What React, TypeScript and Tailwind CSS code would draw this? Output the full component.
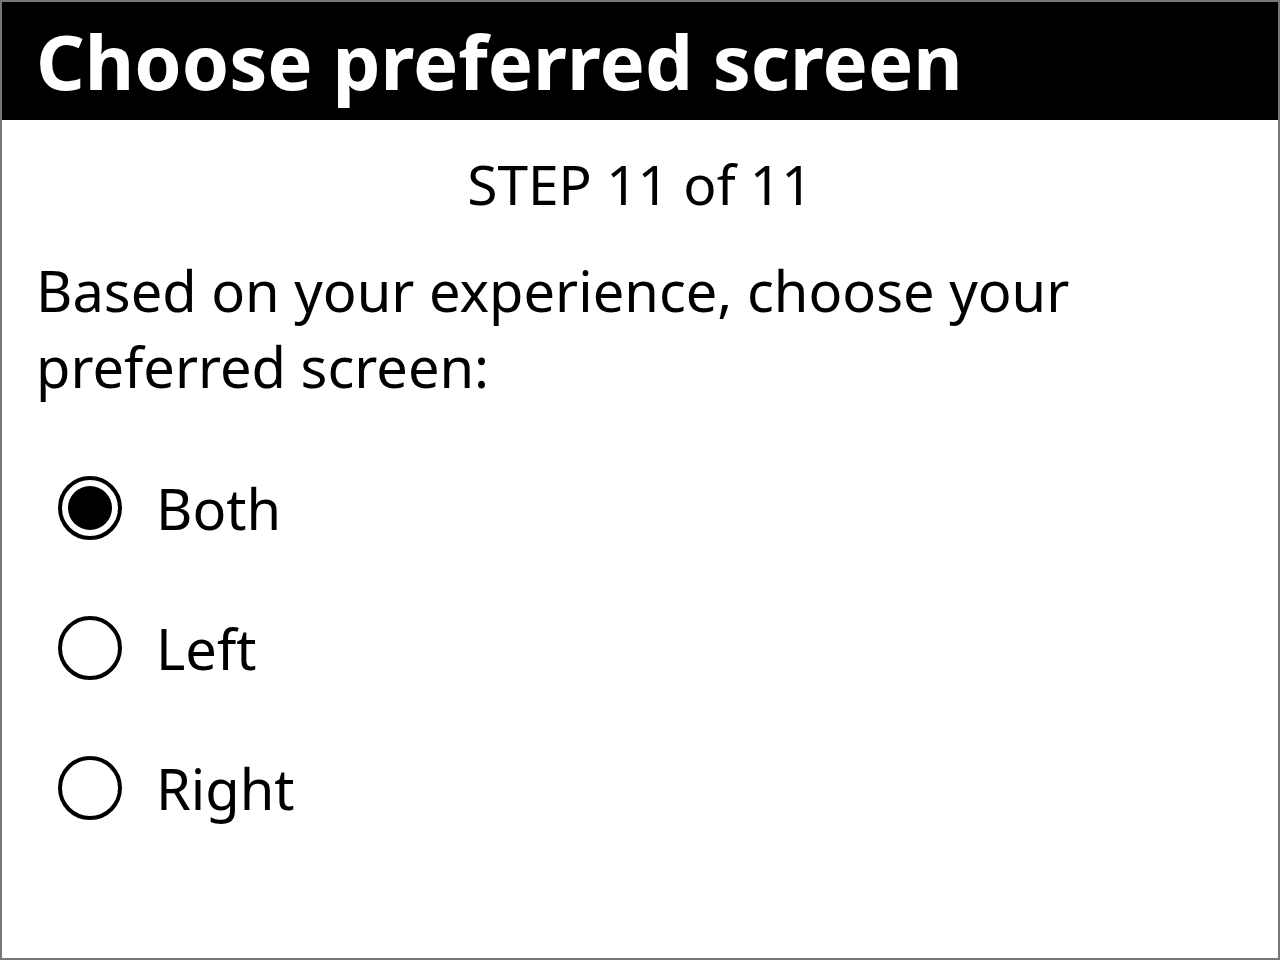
import React from "react";

const options = ["Both", "Left", "Right"];

export default function App() {
  const selected = "Both";
  return (
    <div
      className="w-[1280px] h-[960px] border-2 border-[#777777] bg-white text-black flex flex-col"
      style={{ fontFamily: '"Noto Sans", "Open Sans", sans-serif' }}
    >
      <div className="bg-black text-white h-[118px] flex items-center px-[34px] shrink-0">
        <h1 className="text-[76px] font-bold leading-none tracking-normal">Choose preferred screen</h1>
      </div>
      <div className="px-[34px]">
        <div className="text-center text-[55px] leading-[76px] mt-[26px]">STEP 11 of 11</div>
        <p className="text-[56px] leading-[76px] mt-[30px]">
          Based on your experience, choose your preferred screen:
        </p>
        <div className="flex flex-col mt-[72px] gap-[76px] pl-[22px]">
          {options.map((o) => (
            <label key={o} className="flex items-center gap-[34px] h-[64px]">
              <span className="w-[64px] h-[64px] rounded-full border-[4px] border-black flex items-center justify-center shrink-0">
                {o === selected && <span className="w-[44px] h-[44px] rounded-full bg-black" />}
              </span>
              <span className="text-[56px] leading-none">{o}</span>
            </label>
          ))}
        </div>
      </div>
    </div>
  );
}
